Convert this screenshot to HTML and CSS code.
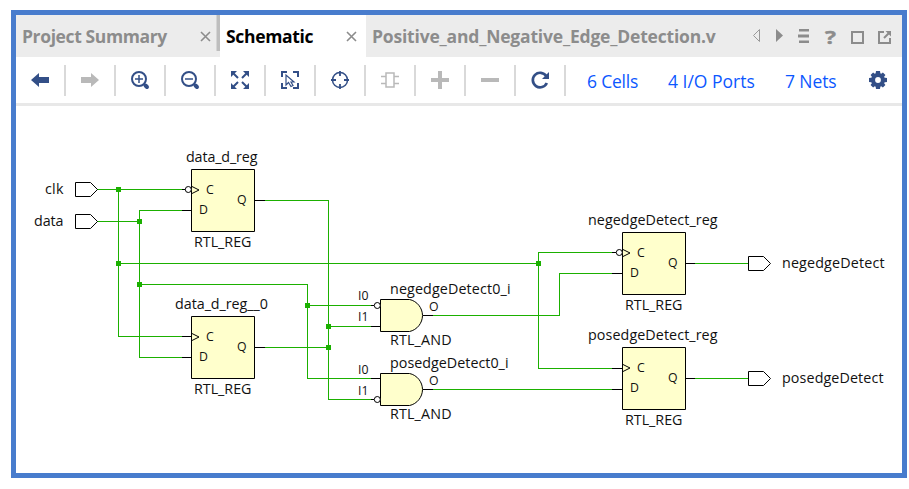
FILE: index.html
```html
<!DOCTYPE html>
<html lang="en">
<head>
<meta charset="utf-8">
<title>Schematic</title>
<link rel="stylesheet" href="styles.css">
</head>
<body>
<main class="window">
  <header class="tabs">
    <div class="tab tab-summary"><span class="name name-summary">Project Summary</span><svg class="close" viewBox="0 0 11 11"><path d="M1 1l9 9M10 1l-9 9"/></svg></div>
    <div class="tab-edge"></div>
    <div class="tab tab-active"><span class="name name-schematic">Schematic</span><svg class="close" viewBox="0 0 11 11"><path d="M1 1l9 9M10 1l-9 9"/></svg></div>
    <div class="tab tab-file"><span class="name name-file">Positive_and_Negative_Edge_Detection.v</span></div>
    <svg class="controls" width="150" height="42" viewBox="752 15 150 42">
      <path class="thin" d="M759.5 29.5v12l-6-6z"/>
      <path class="solid" d="M776 29v13l7-6.500z"/>
      <path class="solid" d="M799 29h10v2.500h-10zM798 34.500h11v3h-11zM799 40.500h10v2.500h-10z"/>
      <text x="825" y="44" textLength="11" lengthAdjust="spacingAndGlyphs">?</text>
      <path class="bold" d="M852 32h11v11h-11z"/>
      <path class="bold" d="M884 32h-5v11h11v-5M884 38l5-5"/>
      <path class="solid" d="M885.500 31h5.500v5.500z"/>
    </svg>
  </header>
  <nav class="toolbar">
    <div class="tool"><svg viewBox="0 0 18 18"><path class="fill" d="M0 9l8-7v4h10v6H8v4z"/></svg></div>
    <div class="tool off"><svg viewBox="0 0 18 18"><path class="fill" d="M18 9l-8-7v4H0v6h10v4z"/></svg></div>
    <div class="tool"><svg viewBox="0 0 18 18"><circle cx="8" cy="8" r="7" stroke-width="2"/><path d="M4 8h8M8 4v8" stroke-width="1.500"/><path d="M13 13l1 1" stroke-width="2"/><path d="M14.500 14.500l1.500 1.500" stroke-width="4" stroke-linecap="round"/></svg></div>
    <div class="tool"><svg viewBox="0 0 18 18"><circle cx="8" cy="8" r="7" stroke-width="2"/><path d="M4 8h8" stroke-width="1.500"/><path d="M13 13l1 1" stroke-width="2"/><path d="M14.500 14.500l1.500 1.500" stroke-width="4" stroke-linecap="round"/></svg></div>
    <div class="tool"><svg viewBox="0 0 18 18"><path class="fill" d="M0 0h6L0 6zM18 0v6l-6-6zM0 18v-6l6 6zM18 18h-6l6-6z"/><path d="M2 2l5 5M16 2l-5 5M2 16l5-5M16 16l-5-5" stroke-width="2"/></svg></div>
    <div class="tool"><svg viewBox="0 0 18 18"><path d="M1 6V1h5M12 1h5v5M17 12v5h-5M6 17H1v-5" stroke-width="2"/><path d="M5 4v10l2.500-2.500L10 15.500l2-1-2-3.500h3z" stroke-width="1.200"/></svg></div>
    <div class="tool"><svg viewBox="0 0 18 18"><circle cx="9" cy="9" r="7.500" stroke-width="1.500"/><path d="M9 0v5M9 13v5M0 9h5M13 9h5" stroke-width="1.800"/></svg></div>
    <div class="tool off"><svg viewBox="0 0 18 18"><path d="M5 2h8v14H5zM0 5.500h5M0 12.500h5M13 5.500h5M13 12.500h5" stroke-width="1.500"/></svg></div>
    <div class="tool off"><svg viewBox="0 0 18 18"><path d="M9 0v18M0 9h18" stroke-width="4"/></svg></div>
    <div class="tool off"><svg viewBox="0 0 18 18"><path d="M0 9h18" stroke-width="4"/></svg></div>
    <div class="tool"><svg viewBox="0 0 18 18"><path d="M15.200 5A7.300 7.300 0 1 0 15.800 12" stroke-width="2.700"/><path class="fill" d="M18 1v7h-7z"/></svg></div>
    <a class="stat stat-cells">6 Cells</a>
    <a class="stat stat-ports">4 I/O Ports</a>
    <a class="stat stat-nets">7 Nets</a>
    <svg class="gear" viewBox="-9 -9 18 18"><circle r="4.900" stroke-width="4"/><path class="fill" d="M-2-9h4l.6 4h-5.200zM-2 9h4l.6-4h-5.200zM-9-2v4l4 .6v-5.200zM9-2v4l-4 .6v-5.200z"/><path class="fill" transform="rotate(45)" d="M-1.800-8.700h3.600l.6 4h-4.800zM-1.800 8.700h3.600l.6-4h-4.800zM-8.700-1.800v3.600l4 .6v-4.800zM8.700-1.800v3.600l-4 .6v-4.800z"/></svg>
  </nav>
  <svg class="canvas" width="886" height="367" viewBox="16 106 886 367">
    <g class="wire">
      <path d="M97 189.500H182M118.500 189.500V336.500H182M97 221.500H139.500M182 210.500H139.500V357.500H182M118.500 263.500H538.500M612 252.500H538.500V368.500H612M139.500 284.500H307.500V378.500H371M307.500 305.500H371M265 200.500H328.500V399.500H371M265 347.500H328.500M328.500 326.500H371M433 315.500H559.500V273.500H612M433 389.500H612M695 263.500H748M695 378.500H748"/>
    </g>
    <path class="dot" d="M116 187h5v5h-5zM137 219h5v5h-5zM116 261h5v5h-5zM137 282h5v5h-5zM305 303h5v5h-5zM326 324h5v5h-5zM326 345h5v5h-5zM536 261h5v5h-5z"/>
    <path class="lead" d="M182 189.500h4M182 210.500h9M255 200.500h10M182 336.500h9M182 357.500h9M255 347.500h10M371 305.500h3M371 326.500h9M423 315.500h10M371 378.500h9M371 399.500h3M423 389.500h10M612 252.500h4M612 273.500h10M686 263.500h9M612 368.500h10M612 389.500h10M686 378.500h9"/>
    <g class="cell">
      <path d="M191.500 169.500h63v62h-63zM191.500 316.500h63v62h-63zM622.500 232.500h63v62h-63zM622.500 347.500h63v62h-63z"/>
      <path d="M409.500 299.500H380.500V331.500H409.500C417 330 422.500 323 422.500 315.500S417 301 409.500 299.500zM409.500 373.500H380.500V405.500H409.500C417 404 422.500 397 422.500 389.500S417 375 409.500 373.500z"/>
    </g>
    <g class="port">
      <path d="M75.500 182.500h15l7 7-7 7h-15zM75.500 214.500h15l7 7-7 7h-15zM748.500 256.500h15l7 7-7 7h-15zM748.500 371.500h15l7 7-7 7h-15z"/>
      <path d="M192 186.500l7 3.500-7 3.500M192 333.500l7 3.500-7 3.500M623 249.500l7 3.500-7 3.500M623 364.500l7 3.500-7 3.500"/>
    </g>
    <g class="bubble"><circle cx="188.300" cy="189.500" r="3"/><circle cx="377.300" cy="305.500" r="3"/><circle cx="377.300" cy="399.500" r="3"/><circle cx="619.300" cy="252.500" r="3"/></g>
    <g class="label">
      <text x="45" y="194" textLength="18.500">clk</text>
      <text x="34" y="226" textLength="29.500">data</text>
      <text x="186" y="162" textLength="71.500">data_d_reg</text>
      <text x="194" y="247" textLength="57.500">RTL_REG</text>
      <text x="175" y="309" textLength="93">data_d_reg__0</text>
      <text x="194" y="394" textLength="57.500">RTL_REG</text>
      <text x="390" y="294" textLength="120.500">negedgeDetect0_i</text>
      <text x="390" y="345" textLength="61.500">RTL_AND</text>
      <text x="390" y="368" textLength="118.500">posedgeDetect0_i</text>
      <text x="390" y="419" textLength="61.500">RTL_AND</text>
      <text x="588" y="225" textLength="129.500">negedgeDetect_reg</text>
      <text x="625" y="310" textLength="57.500">RTL_REG</text>
      <text x="588" y="340" textLength="129.500">posedgeDetect_reg</text>
      <text x="625" y="425" textLength="57.500">RTL_REG</text>
      <text x="782" y="268" textLength="102.500">negedgeDetect</text>
      <text x="782" y="383" textLength="101.500">posedgeDetect</text>
    </g>
    <g class="pin">
      <text x="206" y="194">C</text><text x="199" y="214">D</text><text x="237" y="204">Q</text>
      <text x="206" y="341">C</text><text x="199" y="361">D</text><text x="237" y="351">Q</text>
      <text x="637" y="257">C</text><text x="630" y="277">D</text><text x="668" y="267">Q</text>
      <text x="637" y="372">C</text><text x="630" y="392">D</text><text x="668" y="382">Q</text>
      <text x="358" y="300">I0</text><text x="358" y="321">I1</text><text x="429" y="311">O</text>
      <text x="358" y="374">I0</text><text x="358" y="395">I1</text><text x="429" y="385">O</text>
    </g>
  </svg>
</main>
</body>
</html>
```

FILE: styles.css
```css
* { box-sizing: border-box; }
body {
  margin: 0;
  padding: 10px 2px 11px 11px;
  background: #fff;
  font-family: "Open Sans", "Noto Sans", sans-serif;
}
.window {
  width: 896px;
  height: 468px;
  border: 5px solid #487ccd;
  display: flex;
  flex-direction: column;
}
svg { display: block; flex: none; }
.tabs { display: flex; height: 42px; background: #ececec; }
.tab { display: flex; align-items: center; justify-content: space-between; color: #8c8c8c; }
.tab-summary { width: 200px; padding: 0 5px 0 6px; }
.tab-edge { width: 4px; height: 36px; background: #bebebe; border-left: 1px solid #d5d5d5; }
.tab-active { width: 146px; padding: 0 9px 0 6px; background: #fff; color: #000; }
.tab-file { width: 370px; padding-left: 6px; }
.name { font-size: 17.5px; font-weight: 700; line-height: 24px; white-space: nowrap; }
.name-summary { letter-spacing: -0.38px; }
.name-schematic { letter-spacing: -0.33px; }
.name-file { letter-spacing: -0.19px; }
.close { width: 11px; height: 11px; fill: none; stroke: #8c8c8c; stroke-width: 1.6; }
.controls { margin-left: auto; }
.controls .thin { fill: none; stroke: #999; }
.controls .solid { fill: #8c8c8c; }
.controls .bold { fill: none; stroke: #8c8c8c; stroke-width: 2; }
.controls text { font-size: 18px; font-weight: 700; fill: #8c8c8c; stroke: #8c8c8c; stroke-width: .4; }
.toolbar {
  display: flex;
  align-items: center;
  height: 49px;
  border-bottom: 3px solid #e8e8e8;
}
.tool {
  width: 50px;
  height: 31px;
  border-right: 2px solid #d9d9d9;
  display: flex;
  align-items: center;
  justify-content: center;
  color: #334f87;
}
.tool.off { color: #b9b9b9; }
.tool svg, .gear { width: 18px; height: 18px; fill: none; stroke: currentColor; overflow: visible; }
.toolbar .fill { fill: currentColor; stroke: none; }
.stat { color: #0c57ff; font-size: 17.5px; line-height: 24px; white-space: nowrap; margin-top: 1px; }
.stat-cells { width: 81px; margin-left: 21px; letter-spacing: -0.2px; }
.stat-ports { width: 117px; }
.stat-nets { width: 84px; letter-spacing: -0.1px; }
.gear { color: #334f87; }
.canvas { background: #fff; }
.wire, .lead { fill: none; stroke: #1bb000; shape-rendering: crispEdges; }
.lead { stroke: #000; }
.dot { fill: #1bb000; }
.cell { fill: #ffffcc; stroke: #000; }
.port { fill: none; stroke: #000; }
.bubble { fill: #fff; stroke: #000; }
.label { font-size: 14.3px; fill: #111; }
.pin { font-size: 12.3px; fill: #111; }
```
